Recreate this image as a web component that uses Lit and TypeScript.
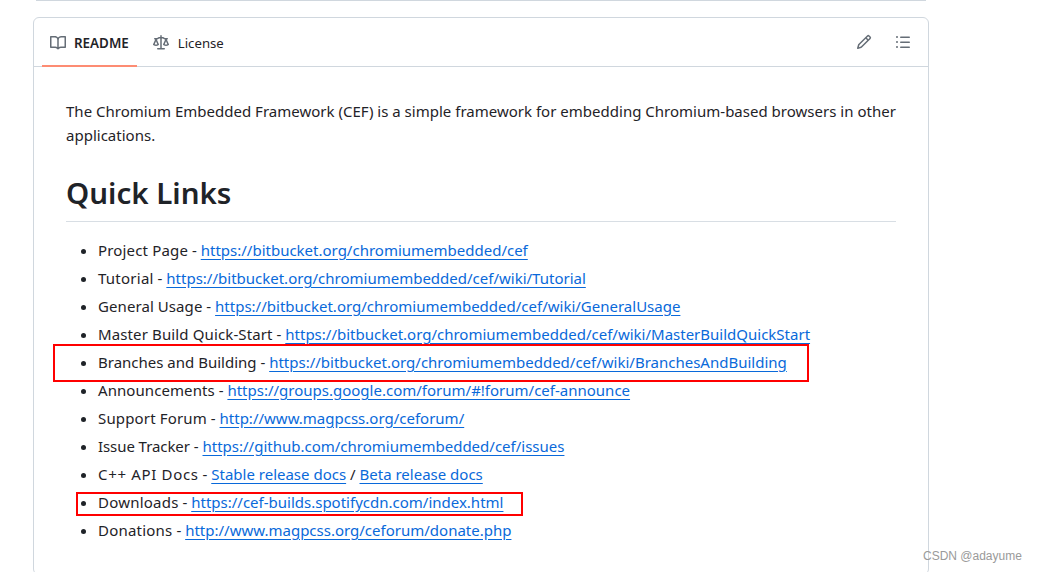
import {LitElement, html, css, svg} from 'lit'
import {customElement} from 'lit/decorators.js'

const icons = {
  book: svg`<path d="M0 1.75A.75.75 0 0 1 .75 1h4.253c1.227 0 2.317.59 3 1.501A3.743 3.743 0 0 1 11.006 1h4.245a.75.75 0 0 1 .75.75v10.5a.75.75 0 0 1-.75.75h-4.507a2.25 2.25 0 0 0-1.591.659l-.622.621a.75.75 0 0 1-1.06 0l-.622-.621A2.25 2.25 0 0 0 5.258 13H.75a.75.75 0 0 1-.75-.75Zm7.251 10.324.004-5.073-.002-2.253A2.25 2.25 0 0 0 5.003 2.5H1.5v9h3.757a3.75 3.75 0 0 1 1.994.574ZM8.755 4.75l-.004 7.322a3.752 3.752 0 0 1 1.992-.572H14.5v-9h-3.495a2.25 2.25 0 0 0-2.25 2.25Z"/>`,
  law: svg`<path d="M8.75.75V2h.985c.304 0 .603.08.867.231l1.29.736c.038.022.08.033.124.033h2.234a.75.75 0 0 1 0 1.5h-.427l2.111 4.692a.75.75 0 0 1-.154.838l-.53-.53.529.531-.001.002-.002.002-.006.006-.006.005-.01.01-.045.04c-.21.176-.441.327-.686.45C14.556 10.78 13.88 11 13 11a4.498 4.498 0 0 1-2.023-.454 3.544 3.544 0 0 1-.686-.45l-.045-.04-.016-.015-.006-.006-.004-.004v-.001a.75.75 0 0 1-.154-.838L12.178 4.5h-.162c-.305 0-.604-.079-.868-.231l-1.29-.736a.245.245 0 0 0-.124-.033H8.75V13h2.5a.75.75 0 0 1 0 1.5h-6.5a.75.75 0 0 1 0-1.5h2.5V3.5h-.984a.245.245 0 0 0-.124.033l-1.289.737c-.265.15-.564.23-.869.23h-.162l2.112 4.692a.75.75 0 0 1-.154.838l-.53-.53.529.531-.001.002-.002.002-.006.006-.016.015-.045.04c-.21.176-.441.327-.686.45C4.556 10.78 3.88 11 3 11a4.498 4.498 0 0 1-2.023-.454 3.544 3.544 0 0 1-.686-.45l-.045-.04-.016-.015-.006-.006-.004-.004v-.001a.75.75 0 0 1-.154-.838L2.178 4.5H1.75a.75.75 0 0 1 0-1.5h2.234a.249.249 0 0 0 .125-.033l1.288-.737c.265-.15.564-.23.869-.23h.984V.75a.75.75 0 0 1 1.5 0Zm2.945 8.477c.285.135.718.273 1.305.273s1.02-.138 1.305-.273L13 6.327Zm-10 0c.285.135.718.273 1.305.273s1.02-.138 1.305-.273L3 6.327Z"/>`,
  pencil: svg`<path d="M11.013 1.427a1.75 1.75 0 0 1 2.474 0l1.086 1.086a1.75 1.75 0 0 1 0 2.474l-8.61 8.61c-.21.21-.47.364-.756.445l-3.251.93a.75.75 0 0 1-.927-.928l.929-3.25c.081-.286.235-.547.445-.758l8.61-8.61Zm.176 4.823L9.75 4.81l-6.286 6.287a.253.253 0 0 0-.064.108l-.558 1.953 1.953-.558a.253.253 0 0 0 .108-.064Zm1.238-3.763a.25.25 0 0 0-.354 0L10.811 3.75l1.439 1.44 1.263-1.263a.25.25 0 0 0 0-.354Z"/>`,
  list: svg`<path d="M5.75 2.5h8.5a.75.75 0 0 1 0 1.5h-8.5a.75.75 0 0 1 0-1.5Zm0 5h8.5a.75.75 0 0 1 0 1.5h-8.5a.75.75 0 0 1 0-1.5Zm0 5h8.5a.75.75 0 0 1 0 1.5h-8.5a.75.75 0 0 1 0-1.5ZM2 14a1 1 0 1 1 0-2 1 1 0 0 1 0 2Zm1-6a1 1 0 1 1-2 0 1 1 0 0 1 2 0ZM2 4a1 1 0 1 1 0-2 1 1 0 0 1 0 2Z"/>`,
}

const icon = (name: keyof typeof icons) => html`<svg class="icon" viewBox="0 0 16 16" width="16" height="16">${icons[name]}</svg>`

// slack: px the label runs wider than the substitute font sets it
const links = [
  {label: 'Project Page', href: 'https://bitbucket.org/chromiumembedded/cef', slack: 2},
  {label: 'Tutorial', href: 'https://bitbucket.org/chromiumembedded/cef/wiki/Tutorial', slack: 2},
  {label: 'General Usage', href: 'https://bitbucket.org/chromiumembedded/cef/wiki/GeneralUsage', slack: 1},
  {label: 'Master Build Quick-Start', href: 'https://bitbucket.org/chromiumembedded/cef/wiki/MasterBuildQuickStart', slack: 3},
  {label: 'Branches and Building', href: 'https://bitbucket.org/chromiumembedded/cef/wiki/BranchesAndBuilding', slack: 0},
  {label: 'Announcements', href: 'https://groups.google.com/forum/#!forum/cef-announce', slack: 1},
  {label: 'Support Forum', href: 'http://www.magpcss.org/ceforum/', slack: 2},
  {label: 'Issue Tracker', href: 'https://github.com/chromiumembedded/cef/issues', slack: -1},
]

const tail = [
  {label: 'Downloads', href: 'https://cef-builds.spotifycdn.com/index.html', slack: 2},
  {label: 'Donations', href: 'http://www.magpcss.org/ceforum/donate.php', slack: 2},
]

const label = (text: string, slack: number) =>
  html`<span style="letter-spacing: ${(slack / text.length).toFixed(3)}px">${text}</span>`

@customElement('app-root')
export class AppRoot extends LitElement {
  static styles = css`
    :host {
      display: block;
      position: relative;
      height: 572px;
      overflow: hidden;
      background: #fff;
      color: #1f2328;
      font-family: 'Noto Sans', sans-serif;
      font-size: 15px;
      line-height: 24px;
    }
    .page {
      width: 896px;
      margin-left: 33px;
    }
    .rule {
      height: 1px;
      margin: 0 3px 16px;
      background: #d0d7de;
    }
    .card {
      border: 1px solid #d0d7de;
      border-radius: 6px;
    }
    .bar {
      display: flex;
      justify-content: space-between;
      height: 48px;
      padding-left: 8px;
      border-bottom: 1px solid #d0d7de;
    }
    .tabs,
    .tools {
      display: flex;
      align-items: center;
    }
    .tabs {
      gap: 8px;
      align-items: stretch;
    }
    .tab {
      display: flex;
      align-items: center;
      gap: 8px;
      height: 49px;
      margin-bottom: -1px;
      padding: 2px 8px 0;
      box-sizing: border-box;
      border-bottom: 2px solid transparent;
      font-size: 13.4px;
    }
    .tab.active {
      font-weight: 600;
      border-bottom-color: #fd8c73;
    }
    .tab.plain {
      gap: 9px;
      font-size: 13.2px;
    }
    .tools {
      gap: 23px;
      padding-right: 17px;
    }
    .icon {
      display: block;
      fill: #656d76;
    }
    .body {
      padding: 32px;
    }
    p {
      margin: 0 0 16px;
      letter-spacing: 0.01px;
    }
    h1 {
      margin: 26px 0 16px;
      padding-bottom: 7.6px;
      border-bottom: 1px solid #d8dee4;
      font-size: 29.5px;
      font-weight: 600;
      line-height: 40px;
    }
    ul {
      margin: 0;
      padding: 0 0 0 32px;
    }
    li + li {
      margin-top: 4px;
    }
    a {
      color: #0969da;
      text-decoration: underline;
      text-underline-offset: 3px;
    }
    .mark {
      position: absolute;
      border: 2px solid #f00;
      box-sizing: border-box;
    }
    .mark.building {
      left: 53px;
      top: 344px;
      width: 756px;
      height: 38px;
    }
    .mark.downloads {
      left: 76px;
      top: 492px;
      width: 447px;
      height: 24px;
    }
    .watermark {
      position: absolute;
      left: 923px;
      top: 548px;
      font-family: 'Liberation Sans', sans-serif;
      font-size: 12px;
      line-height: 16px;
      color: #9a9a9a;
      white-space: nowrap;
    }
  `

  render() {
    return html`
      <div class="page">
        <div class="rule"></div>
        <section class="card">
          <div class="bar">
            <div class="tabs">
              <div class="tab active">${icon('book')}README</div>
              <div class="tab plain">${icon('law')}License</div>
            </div>
            <div class="tools">${icon('pencil')}${icon('list')}</div>
          </div>
          <div class="body">
            <p>The Chromium Embedded Framework (CEF) is a simple framework for embedding Chromium-based browsers in other applications.</p>
            <h1>Quick Links</h1>
            <ul>
              ${links.map(l => html`<li>${label(l.label, l.slack)} - <a href=${l.href}>${l.href}</a></li>`)}
              <li>${label('C++ API Docs', 8)} - <a href="#">Stable release docs</a> / <a href="#">Beta release docs</a></li>
              ${tail.map(l => html`<li>${label(l.label, l.slack)} - <a href=${l.href}>${l.href}</a></li>`)}
            </ul>
          </div>
        </section>
      </div>
      <div class="mark building"></div>
      <div class="mark downloads"></div>
      <div class="watermark">CSDN @adayume</div>
    `
  }
}

declare global {
  interface HTMLElementTagNameMap {
    'app-root': AppRoot
  }
}
